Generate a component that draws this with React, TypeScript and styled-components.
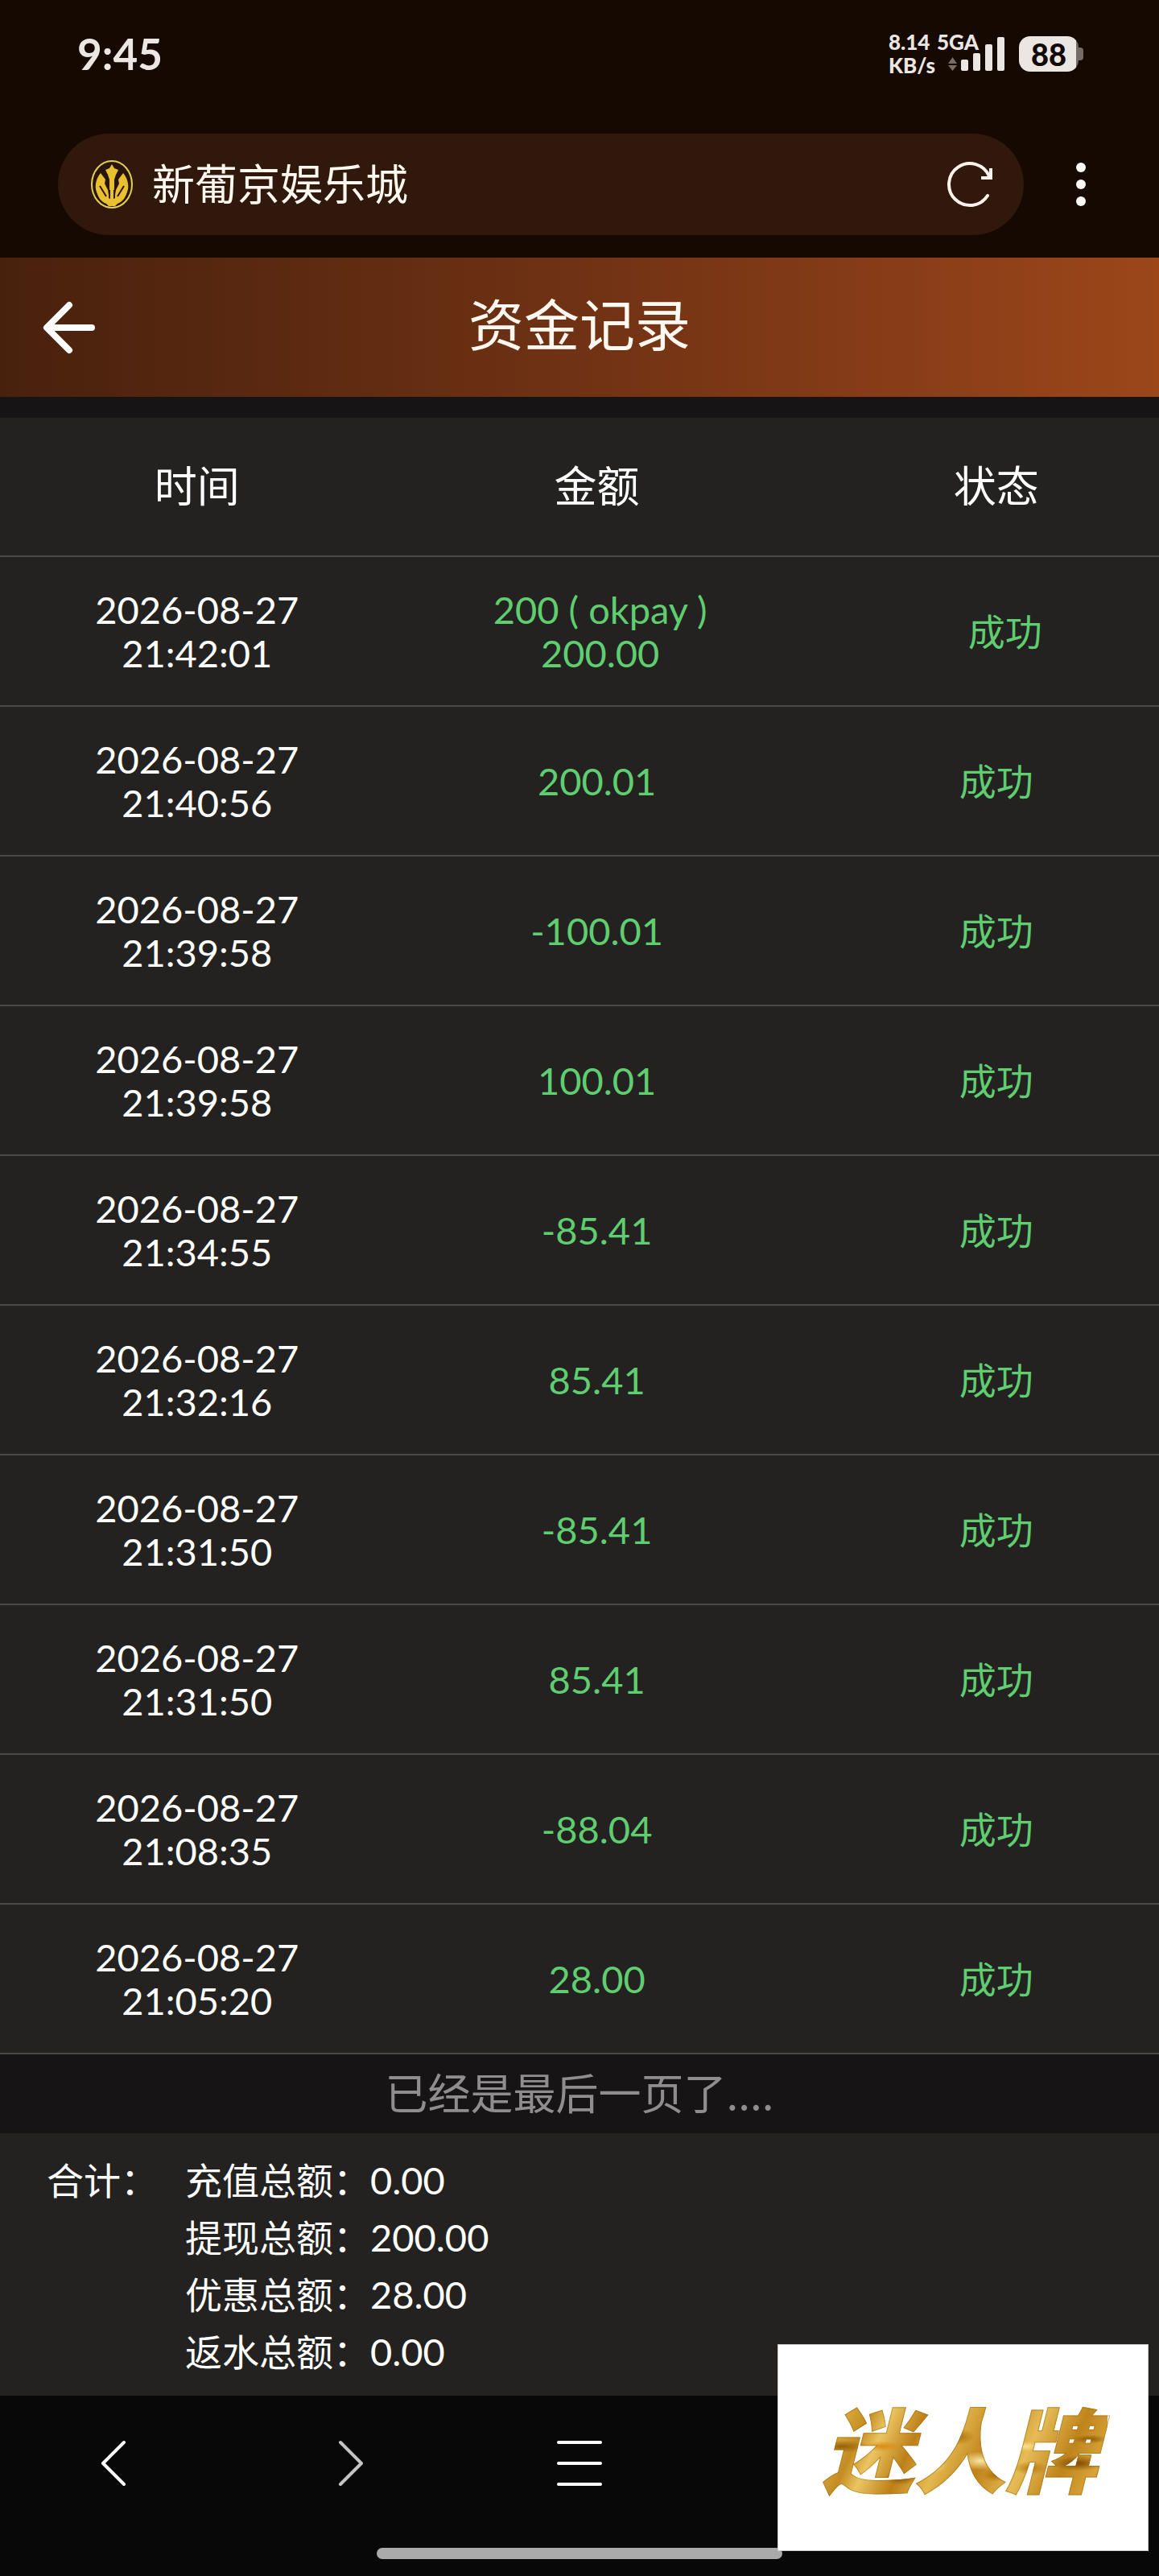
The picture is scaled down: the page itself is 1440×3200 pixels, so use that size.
import React from "react";
import styled, { createGlobalStyle, css } from "styled-components";

const GlobalStyle = createGlobalStyle`
  * { box-sizing: border-box; }
  body {
    margin: 0;
    background: #080808;
    font-family: Lato, "Noto Sans CJK SC", sans-serif;
    color: #fff;
  }
  button {
    display: grid;
    place-items: center;
    padding: 0;
    border: 0;
    background: none;
    color: inherit;
    cursor: pointer;
  }
  svg { display: block; }
`;

const Page = styled.div`
  display: flex;
  flex-direction: column;
  min-height: 100vh;
`;

const BrowserTop = styled.div`
  background: #150902;
`;

const StatusBar = styled.div`
  display: flex;
  align-items: center;
  justify-content: space-between;
  height: 134px;
  padding: 0 94px 0 96px;
  color: #ece6e3;
  font-weight: 700;
`;

const Clock = styled.time`
  font-size: 53px;
  line-height: 54px;
`;

const StatusIcons = styled.div`
  display: flex;
  align-items: center;
`;

const Speed = styled.div`
  display: flex;
  flex-direction: column;
  width: 60px;
  font-size: 26px;
  font-weight: 900;
  line-height: 29px;
`;

const Signal = styled.div`
  display: grid;
  width: 84px;
  height: 58px;
  margin-right: 18px;
`;

const NetworkType = styled.span`
  grid-area: 1 / 1;
  font-size: 26px;
  font-weight: 900;
  line-height: 29px;
`;

const SignalBars = styled.svg`
  grid-area: 1 / 1;
  align-self: center;
  justify-self: end;
`;

const Battery = styled.div`
  display: flex;
  align-items: center;
`;

const BatteryBody = styled.span`
  width: 74px;
  height: 44px;
  border-radius: 14px;
  background: linear-gradient(90deg, #ece6e3 71px, #766c67 71px);
  color: #120a06;
  font-size: 38px;
  font-weight: 900;
  line-height: 44px;
  text-align: center;
`;

const BatteryCap = styled.span`
  width: 6px;
  height: 16px;
  border-radius: 0 4px 4px 0;
  background: #766c67;
`;

const AddressBar = styled.div`
  display: flex;
  align-items: center;
  gap: 35px;
  padding: 32px 61px 28px 72px;
`;

const AddressPill = styled.label`
  display: flex;
  flex: 1;
  align-items: center;
  min-width: 0;
  height: 126px;
  padding: 0 31px 0 40px;
  border-radius: 63px;
  background: #30180c;
`;

const AddressInput = styled.input`
  flex: 1;
  min-width: 0;
  margin-left: 23px;
  padding: 0;
  border: 0;
  outline: 0;
  background: none;
  color: #fff8f0;
  font: inherit;
  font-size: 53px;
  line-height: 80px;
`;

const IconButton = styled.button`
  flex: none;
  width: 72px;
  height: 80px;
`;

const TitleBar = styled.header`
  display: grid;
  grid-template-columns: 172px 1fr 172px;
  align-items: center;
  height: 173px;
  background: linear-gradient(90deg, #48210d, #703214 50%, #9c461a);
`;

const BackButton = styled.button`
  width: 172px;
  height: 172px;
`;

const Title = styled.h1`
  margin: 0;
  padding-bottom: 6px;
  color: #fff8f0;
  font-size: 69px;
  font-weight: 400;
  line-height: 80px;
  text-align: center;
`;

const Records = styled.main`
  padding-top: 26px;
  background: #161415;
`;

const RecordTable = styled.table`
  width: 100%;
  border-collapse: separate;
  border-spacing: 0;
  table-layout: fixed;
  background: #232220;
`;

const cell = css`
  padding: 0;
  border-bottom: 2px solid #4a4947;
  text-align: center;
  vertical-align: middle;
`;

const HeadCell = styled.th<{ $width: string; $shift?: number }>`
  ${cell}
  width: ${(p) => p.$width};
  height: 173px;
  padding-bottom: 2px;
  padding-left: ${(p) => p.$shift ?? 0}px;
  font-size: 53px;
  font-weight: 400;
  line-height: 80px;
`;

const Cell = styled.td<{ $tone?: "success"; $shift?: number }>`
  ${cell}
  height: 186px;
  padding-left: ${(p) => p.$shift ?? 0}px;
  color: ${(p) => (p.$tone === "success" ? "#5fcd70" : "#fff")};
  font-size: 47px;
  line-height: 54px;
`;

const Line = styled.span`
  display: block;
`;

const Status = styled.span`
  font-size: 46px;
`;

const EndNotice = styled.p`
  margin: 0;
  padding-bottom: 6px;
  color: #8f8d8e;
  font-family: "Noto Sans CJK SC", sans-serif;
  font-size: 53px;
  line-height: 92px;
  text-align: center;
`;

const Summary = styled.section`
  display: flex;
  padding: 23px 58px 19px;
  background: #232220;
  font-size: 46px;
  line-height: 71px;
`;

const SummaryTitle = styled.div`
  width: 172px;
`;

const SummaryList = styled.dl`
  display: grid;
  grid-template-columns: 230px auto;
  margin: 0;
`;

const SummaryValue = styled.dd`
  margin: 0;
  font-size: 47px;
`;

const BottomBar = styled.footer`
  position: relative;
  flex: 1;
  background: #080808;
`;

const NavButtons = styled.nav`
  display: grid;
  grid-template-columns: repeat(5, 1fr);
`;

const NavButton = styled.button`
  height: 168px;
`;

const HomeIndicator = styled.div`
  width: 35%;
  height: 14px;
  margin: 21px auto;
  border-radius: 7px;
  background: #aaa;
`;

const BrandCard = styled.div`
  position: absolute;
  right: 13px;
  bottom: 31px;
  display: grid;
  place-items: center;
  width: 461px;
  height: 257px;
  padding: 0 8px 4px 0;
  border: 1px solid #ccc;
  background: #fff;
`;

const BrandText = styled.span`
  padding: 0 12px;
  font-family: "Noto Sans CJK SC", sans-serif;
  font-size: 114px;
  font-style: italic;
  font-weight: 900;
  line-height: 150px;
  color: transparent;
  -webkit-text-stroke: 1px #9a690f88;
  background:
    radial-gradient(ellipse at 24% 50%, #dc8a10 0, #dc8a1000 24px),
    radial-gradient(ellipse at 40% 66%, #f5d682 0, #f5d68200 22px),
    radial-gradient(ellipse at 57% 62%, #fbe8a4 0, #fbe8a400 26px),
    radial-gradient(ellipse at 49% 42%, #a86a08 0, #a86a0800 22px),
    radial-gradient(ellipse at 62% 74%, #b06c04 0, #b06c0400 16px),
    radial-gradient(ellipse at 90% 64%, #7f4c03 0, #7f4c0300 32px),
    radial-gradient(ellipse at 94% 44%, #8f5a06 0, #8f5a0600 22px),
    radial-gradient(ellipse at 72% 50%, #fbe08c 0, #fbe08c00 22px),
    radial-gradient(ellipse at 74% 68%, #b87c12 0, #b87c1200 22px),
    radial-gradient(ellipse at 10% 50%, #94600a 0, #94600a00 34px),
    radial-gradient(ellipse at 30% 76%, #8f5506 0, #8f550600 20px),
    linear-gradient(115deg, #a87012 0, #dcae42 12%, #c48c22 20%, #ebc562 26%, #bd8018 36%, #e3b950 46%, #c0821a 58%, #e6bc56 70%, #bf841c 82%, #d8a438 92%, #9a6208 100%);
  background-clip: text;
  -webkit-background-clip: text;
`;

type RecordRow = { date: string; time: string; amount: string[]; wide?: boolean };

const DATE = "2026-08-27";

const records: RecordRow[] = [
  { date: DATE, time: "21:42:01", amount: ["200 ( okpay )", "200.00"], wide: true },
  { date: DATE, time: "21:40:56", amount: ["200.01"] },
  { date: DATE, time: "21:39:58", amount: ["-100.01"] },
  { date: DATE, time: "21:39:58", amount: ["100.01"] },
  { date: DATE, time: "21:34:55", amount: ["-85.41"] },
  { date: DATE, time: "21:32:16", amount: ["85.41"] },
  { date: DATE, time: "21:31:50", amount: ["-85.41"] },
  { date: DATE, time: "21:31:50", amount: ["85.41"] },
  { date: DATE, time: "21:08:35", amount: ["-88.04"] },
  { date: DATE, time: "21:05:20", amount: ["28.00"] },
];

const totals = [
  ["充值总额：", "0.00"],
  ["提现总额：", "200.00"],
  ["优惠总额：", "28.00"],
  ["返水总额：", "0.00"],
];

const SiteIcon = () => (
  <svg width="54" height="62" viewBox="0 0 54 62" aria-hidden="true">
    <ellipse cx="27" cy="31" rx="25" ry="29" fill="#2a1505" stroke="#e3cf52" strokeWidth="2" />
    <g fill="#e8c030">
      <path d="M27 6l3 5 5 2-3 6-2 6v9l-1 16h-4l-1-16v-9l-2-6-3-6 5-2z" />
      <path d="M13 17l6 8-1 5 4 8 2 12v5c-9-2-15-9-17-18-1-7 1-14 6-20z" />
      <path d="M41 17l-6 8 1 5-4 8-2 12v5c9-2 15-9 17-18 1-7-1-14-6-20z" />
      <path d="M8 38c5 9 10 11 19 11s14-2 19-11c-1 9-6 15-12 17l-3 3h-8l-3-3C14 53 9 47 8 38z" />
    </g>
    <g stroke="#2a1505" strokeWidth="2" fill="none">
      <path d="M12 33l8 13M42 33l-8 13M24 38v10M30 38v10" />
    </g>
  </svg>
);

const ReloadIcon = () => (
  <svg width="60" height="60" viewBox="0 0 60 60" fill="none" stroke="#fff3ec" strokeWidth="4" strokeLinecap="round" aria-hidden="true">
    <path d="M52 44A26 26 0 1 1 54 20" />
    <path d="M56 12v10H46" strokeLinecap="square" />
  </svg>
);

export default function App() {
  return (
    <Page lang="zh-CN">
      <GlobalStyle />
      <BrowserTop>
        <StatusBar>
          <Clock>9:45</Clock>
          <StatusIcons>
            <Speed>
              <span>8.14</span>
              <span>KB/s</span>
            </Speed>
            <Signal>
              <NetworkType>5GA</NetworkType>
              <SignalBars width="70" height="42" viewBox="0 0 70 42" aria-hidden="true">
                <path d="M0 33l5.500-8 5.500 8zM0 35h11l-5.500 7z" fill="#766c67" />
                <g fill="#ece6e3">
                  <rect x="16" y="28" width="9" height="14" rx="2" />
                  <rect x="31" y="20" width="9" height="22" rx="2" />
                  <rect x="46" y="9" width="9" height="33" rx="2" />
                  <rect x="61" y="0" width="9" height="42" rx="2" />
                </g>
              </SignalBars>
            </Signal>
            <Battery>
              <BatteryBody>88</BatteryBody>
              <BatteryCap />
            </Battery>
          </StatusIcons>
        </StatusBar>
        <AddressBar>
          <AddressPill>
            <SiteIcon />
            <AddressInput aria-label="网址" defaultValue="新葡京娱乐城" />
            <IconButton aria-label="刷新">
              <ReloadIcon />
            </IconButton>
          </AddressPill>
          <IconButton aria-label="更多">
            <svg width="12" height="56" viewBox="0 0 12 56" fill="#fff8f4" aria-hidden="true">
              <circle cx="6" cy="7" r="6" />
              <circle cx="6" cy="28" r="6" />
              <circle cx="6" cy="49" r="6" />
            </svg>
          </IconButton>
        </AddressBar>
      </BrowserTop>

      <TitleBar>
        <BackButton aria-label="返回">
          <svg width="66" height="66" viewBox="0 0 66 66" fill="none" stroke="#fff" strokeWidth="8" strokeLinecap="round" strokeLinejoin="round" aria-hidden="true">
            <path d="M33 5L5 33l28 28M6 33h55" />
          </svg>
        </BackButton>
        <Title>资金记录</Title>
      </TitleBar>

      <Records>
        <RecordTable>
          <thead>
            <tr>
              <HeadCell $width="34%">时间</HeadCell>
              <HeadCell $width="35%">金额</HeadCell>
              <HeadCell $width="31%" $shift={42}>状态</HeadCell>
            </tr>
          </thead>
          <tbody>
            {records.map((r, i) => (
              <tr key={i}>
                <Cell>
                  <Line>{r.date}</Line>
                  <Line>{r.time}</Line>
                </Cell>
                <Cell $tone="success" $shift={r.wide ? 8 : 0}>
                  {r.amount.map((a) => (
                    <Line key={a}>{a}</Line>
                  ))}
                </Cell>
                <Cell $tone="success" $shift={r.wide ? 64 : 42}>
                  <Status>成功</Status>
                </Cell>
              </tr>
            ))}
          </tbody>
        </RecordTable>
        <EndNotice>已经是最后一页了....</EndNotice>
      </Records>

      <Summary>
        <SummaryTitle>合计：</SummaryTitle>
        <SummaryList>
          {totals.map(([label, value]) => (
            <React.Fragment key={label}>
              <dt>{label}</dt>
              <SummaryValue>{value}</SummaryValue>
            </React.Fragment>
          ))}
        </SummaryList>
      </Summary>

      <BottomBar>
        <NavButtons>
          <NavButton aria-label="后退">
            <svg width="38" height="58" viewBox="0 0 38 58" fill="none" stroke="#fff" strokeWidth="4" strokeLinecap="round" strokeLinejoin="round" aria-hidden="true">
              <path d="M29 3L3 29l26 26" />
            </svg>
          </NavButton>
          <NavButton aria-label="前进">
            <svg width="38" height="58" viewBox="0 0 38 58" fill="none" stroke="#c4c4c4" strokeWidth="4" strokeLinecap="round" strokeLinejoin="round" aria-hidden="true">
              <path d="M10 3l26 26-26 26" />
            </svg>
          </NavButton>
          <NavButton aria-label="菜单">
            <svg width="58" height="58" viewBox="0 0 58 58" fill="none" stroke="#fff" strokeWidth="4" strokeLinecap="round" aria-hidden="true">
              <path d="M3 3h52M3 29h52M3 55h52" />
            </svg>
          </NavButton>
        </NavButtons>
        <HomeIndicator />
        <BrandCard>
          <BrandText>迷人牌</BrandText>
        </BrandCard>
      </BottomBar>
    </Page>
  );
}
